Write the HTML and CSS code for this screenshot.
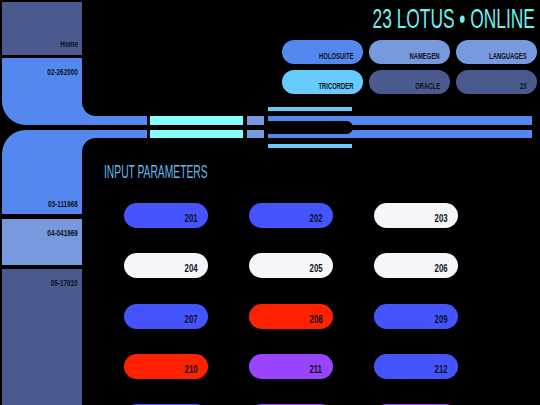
FILE: index.html
```html
<!DOCTYPE html>
<html lang="en">
<head>
<meta charset="utf-8">
<title>LCARS</title>
<link rel="stylesheet" href="styles.css">
</head>
<body>
<div class="screen">
  <div class="band-top">
    <div class="side side-top">
      <div class="panel slate label-bottom home"><span class="lbl">Home</span></div>
      <div class="panel blue label-top elbow-up"><span class="lbl">02-262000</span></div>
    </div>
    <header class="header">
      <h1 class="title"><span class="sq-title">23 LOTUS • ONLINE</span></h1>
      <nav class="nav">
        <div class="nbtn c-blue"><span class="sq-nav">HOLOSUITE</span></div>
        <div class="nbtn c-light"><span class="sq-nav">NAMEGEN</span></div>
        <div class="nbtn c-light"><span class="sq-nav">LANGUAGES</span></div>
        <div class="nbtn c-sky"><span class="sq-nav">TRICORDER</span></div>
        <div class="nbtn c-slate"><span class="sq-nav">ORACLE</span></div>
        <div class="nbtn c-slate"><span class="sq-nav">23</span></div>
      </nav>
    </header>
  </div>

  <div class="band-mid">
    <div class="elbows">
      <div class="elbow-top"><div class="notch notch-top"></div></div>
      <div class="elbow-bot"><div class="notch notch-bot"></div></div>
    </div>
    <div class="blocks blocks-cyan"><div class="blk blk-t"></div><div class="blk blk-b"></div></div>
    <div class="blocks blocks-light"><div class="blk blk-t"></div><div class="blk blk-b"></div></div>
    <div class="rail">
      <div class="line"></div>
      <div class="bars">
        <div class="bar bar-t"></div>
        <div class="bar bar-b"></div>
        <div class="pill"></div>
      </div>
      <div class="line"></div>
    </div>
  </div>

  <div class="band-bot">
    <div class="side side-bot">
      <div class="panel blue label-bottom elbow-down"><span class="lbl">03-111968</span></div>
      <div class="panel light label-top p04"><span class="lbl">04-041969</span></div>
      <div class="panel slate label-top p05"><span class="lbl">05-17010</span></div>
    </div>
    <main class="content">
      <h2 class="section-title"><span class="sq-section">INPUT PARAMETERS</span></h2>
      <div class="grid">
        <div class="gbtn g-blue"><span class="sq-num">201</span></div>
        <div class="gbtn g-blue"><span class="sq-num">202</span></div>
        <div class="gbtn g-white"><span class="sq-num">203</span></div>
        <div class="gbtn g-white"><span class="sq-num">204</span></div>
        <div class="gbtn g-white"><span class="sq-num">205</span></div>
        <div class="gbtn g-white"><span class="sq-num">206</span></div>
        <div class="gbtn g-blue"><span class="sq-num">207</span></div>
        <div class="gbtn g-red"><span class="sq-num">208</span></div>
        <div class="gbtn g-blue"><span class="sq-num">209</span></div>
        <div class="gbtn g-red"><span class="sq-num">210</span></div>
        <div class="gbtn g-purple"><span class="sq-num">211</span></div>
        <div class="gbtn g-blue"><span class="sq-num">212</span></div>
        <div class="gbtn g-blue"></div>
        <div class="gbtn g-purple"></div>
        <div class="gbtn g-purple"></div>
      </div>
    </main>
  </div>
</div>
</body>
</html>
```

FILE: styles.css
```css
* {
  box-sizing: border-box;
  margin: 0;
  padding: 0;
}

html, body {
  background: #000;
}

body {
  width: 540px;
  height: 405px;
  overflow: hidden;
  font-family: "Liberation Sans", Arial, sans-serif;
}

.screen {
  display: flex;
  flex-direction: column;
  height: 405px;
  padding-left: 2px;
}

/* ---------- shared text squeeze ---------- */
.lbl, .sq-nav, .sq-num, .sq-title, .sq-section {
  display: inline-block;
  white-space: nowrap;
  transform-origin: right center;
}
.lbl { transform: scaleX(0.68); }
.sq-nav { transform: scaleX(0.62); }
.sq-num { transform: scaleX(0.74); }
.sq-title { transform: scaleX(0.62); }
.sq-section { transform: scaleX(0.55); transform-origin: left center; }

/* ---------- colours ---------- */
.slate { background: #4a5a8e; }
.blue { background: #5588ee; }
.light { background: #7799dd; }

/* ---------- side panels ---------- */
.side {
  width: 80px;
  display: flex;
  flex-direction: column;
}

.panel {
  display: flex;
  justify-content: flex-end;
  padding-right: 4px;
  color: #0b1020;
  font-weight: 700;
  font-size: 9.4px;
  line-height: 9px;
}
.label-top { align-items: flex-start; padding-top: 9px; }
.label-bottom { align-items: flex-end; padding-bottom: 7.5px; }

/* ---------- top band ---------- */
.band-top {
  display: flex;
  height: 100px;
}

.side-top {
  padding-top: 2px;
  gap: 3px;
}
.home { height: 53px; }
.elbow-up { flex: 1; }

.header {
  flex: 1;
  display: flex;
  flex-direction: column;
  align-items: flex-end;
  padding-top: 5px;
  padding-right: 3px;
}

.title {
  font-weight: 400;
  font-size: 28px;
  line-height: 28px;
  color: #6ef2f2;
  margin-right: 2px;
}

.nav {
  display: grid;
  grid-template-columns: repeat(3, 81px);
  column-gap: 6px;
  row-gap: 6px;
  margin-top: 7px;
}

.nbtn {
  height: 24px;
  border-radius: 12px;
  display: flex;
  justify-content: flex-end;
  align-items: flex-end;
  padding: 0 10px 4.5px 0;
  font-weight: 700;
  font-size: 9.5px;
  line-height: 9px;
  color: #0b1020;
}
.c-blue { background: #5588ee; }
.c-light { background: #7799dd; }
.c-sky { background: #66ccff; }
.c-slate { background: #4a5a8e; }

/* ---------- middle band (elbows + rails) ---------- */
.band-mid {
  display: flex;
  height: 55px;
}

.elbows {
  width: 145px;
  display: flex;
  flex-direction: column;
  gap: 5px;
}

.elbow-top, .elbow-bot {
  height: 25px;
  background: #5588ee;
  display: flex;
  justify-content: flex-end;
}
.elbow-top {
  border-bottom-left-radius: 24px;
  align-items: flex-start;
}
.elbow-bot {
  border-top-left-radius: 24px;
  align-items: flex-end;
}

.notch {
  width: 65px;
  background: #000;
}
.notch-top {
  height: 16px;
  border-bottom-left-radius: 14px;
}
.notch-bot {
  height: 17px;
  border-top-left-radius: 14px;
}

.blocks {
  display: flex;
  flex-direction: column;
  padding-top: 16px;
  gap: 5px;
}
.blk-t { height: 9px; }
.blk-b { height: 8px; }

.blocks-cyan {
  width: 93px;
  margin-left: 3px;
}
.blocks-cyan .blk { background: #88ffff; }

.blocks-light {
  width: 17px;
  margin-left: 4px;
}
.blocks-light .blk { background: #7799dd; }

.rail {
  width: 264px;
  margin-left: 4px;
  display: flex;
  flex-direction: column;
  padding-top: 7px;
}

.line {
  width: 84px;
  height: 4px;
  background: #66ccff;
}

.bars {
  display: grid;
  height: 22px;
  margin: 5px 0 6px;
}
.bars > * { grid-area: 1 / 1; }

.bar { background: #5588ee; }
.bar-t { align-self: start; height: 9px; }
.bar-b { align-self: end; height: 8px; }

.pill {
  align-self: start;
  justify-self: start;
  margin-top: 5px;
  width: 85px;
  height: 13px;
  background: #000;
  border-radius: 0 6.5px 6.5px 0;
}

/* ---------- bottom band ---------- */
.band-bot {
  display: flex;
  flex: 1;
  min-height: 0;
}

.elbow-down {
  height: 59px;
  padding-bottom: 6px;
}
.p04 {
  height: 46px;
  margin-top: 5px;
}
.p05 {
  flex: 1;
  margin-top: 4px;
}

.content {
  flex: 1;
  padding-left: 22px;
  overflow: hidden;
}

.section-title {
  margin-top: 6.7px;
  font-size: 18.7px;
  line-height: 19px;
  font-weight: 400;
  color: #66b8e8;
}

.grid {
  display: grid;
  grid-template-columns: repeat(3, 84px);
  column-gap: 41px;
  row-gap: 25.3px;
  margin-top: 22.3px;
  margin-left: 19.5px;
}

.gbtn {
  height: 25px;
  border-radius: 12.5px;
  display: flex;
  justify-content: flex-end;
  align-items: flex-end;
  padding: 0 10.4px 5px 0;
  font-weight: 700;
  font-size: 10.5px;
  line-height: 10px;
  color: #0b1020;
}
.g-blue { background: #4455ff; }
.g-white { background: #f5f6fa; }
.g-red { background: #ff2200; }
.g-purple { background: #9944ff; }
```
